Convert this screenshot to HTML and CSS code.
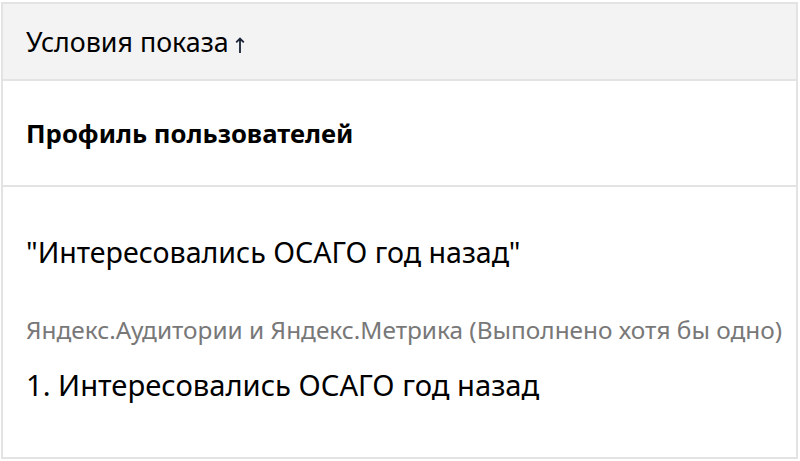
FILE: index.html
```html
<!DOCTYPE html>
<html lang="ru">
<head>
<meta charset="utf-8">
<link rel="stylesheet" href="styles.css">
</head>
<body>
<div class="table">
  <div class="head">
    <span class="head-title">Условия показа</span>
    <svg class="sort" width="10" height="16" viewBox="0 0 10 16"><path d="M5 16V1.5M1.2 5.3L5 1.5l3.8 3.8" fill="none" stroke="#1a2236" stroke-width="1.8"/></svg>
  </div>
  <div class="row group">Профиль пользователей</div>
  <div class="row body">
    <div class="cond-title">"Интересовались ОСАГО год назад"</div>
    <div class="cond-source">Яндекс.Аудитории и Яндекс.Метрика (Выполнено хотя бы одно)</div>
    <div class="cond-item">1. Интересовались ОСАГО год назад</div>
  </div>
</div>
</body>
</html>
```

FILE: styles.css
```css
html, body {
  margin: 0;
  padding: 0;
  background: #fff;
}
body {
  font-family: "Noto Sans", "Open Sans", sans-serif;
  color: #000;
  padding: 2px 1px 0 1px;
}
.table {
  border: 2px solid #e3e3e3;
  width: 797px;
  box-sizing: border-box;
  background: #fff;
}
.head {
  height: 75px;
  background: #f3f3f3;
  border-bottom: 2px solid #e3e3e3;
  display: flex;
  align-items: center;
  gap: 6px;
  padding: 0 23px;
}
.head-title {
  font-size: 26.8px;
  line-height: 34px;
}
.sort {
  margin-top: 7px;
}
.row {
  padding: 0 23px;
}
.group {
  height: 104px;
  border-bottom: 2px solid #e3e3e3;
  display: flex;
  align-items: center;
  font-size: 25.7px;
  font-weight: 700;
}
.body {
  padding-top: 45px;
  padding-bottom: 52px;
}
.cond-title {
  font-size: 28.6px;
  line-height: 40px;
}
.cond-source {
  margin-top: 42px;
  font-size: 24.4px;
  line-height: 32px;
  color: #787878;
  white-space: nowrap;
}
.cond-item {
  margin-top: 19px;
  font-size: 29.2px;
  line-height: 40px;
}
```
